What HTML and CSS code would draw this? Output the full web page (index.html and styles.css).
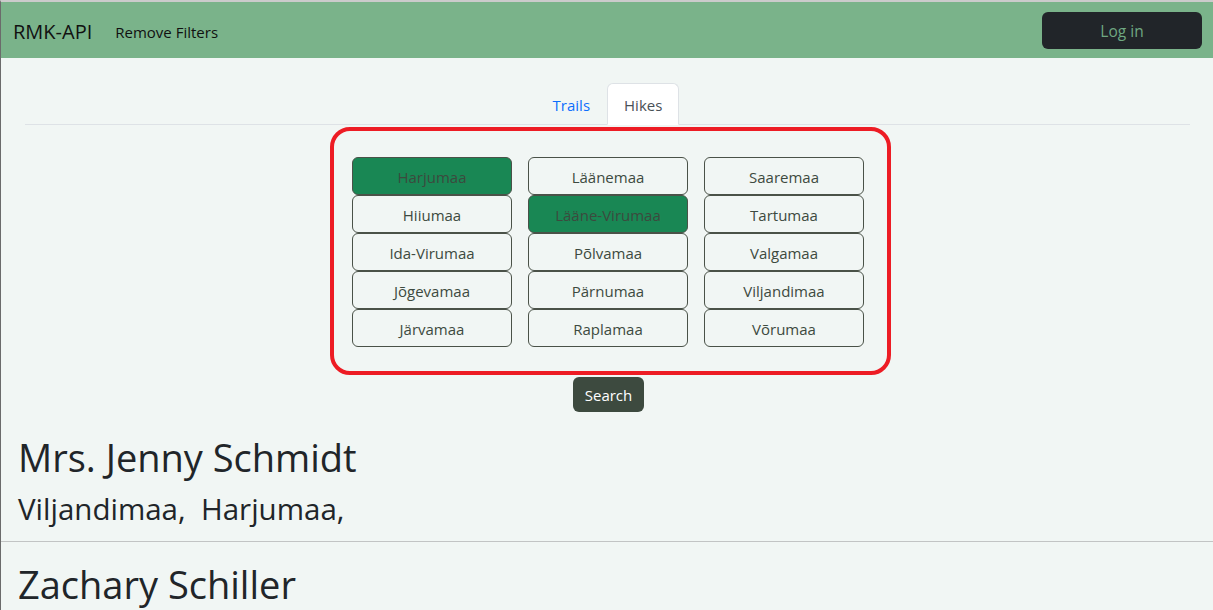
FILE: index.html
```html
<!DOCTYPE html>
<html lang="en">
<head>
<meta charset="utf-8">
<title>RMK-API</title>
<link rel="stylesheet" href="styles.css">
</head>
<body>
<nav class="navbar">
  <a class="brand" href="#">RMK-API</a>
  <a class="nav-link" href="#">Remove Filters</a>
  <button class="btn-login">Log in</button>
</nav>
<main class="content">
  <ul class="tabs">
    <li><a class="tab" href="#">Trails</a></li>
    <li><a class="tab active" href="#">Hikes</a></li>
  </ul>
  <div class="filter-wrap">
    <div class="filter-box">
      <div class="county-grid">
        <button class="county selected">Harjumaa</button>
        <button class="county">Läänemaa</button>
        <button class="county">Saaremaa</button>
        <button class="county">Hiiumaa</button>
        <button class="county selected">Lääne-Virumaa</button>
        <button class="county">Tartumaa</button>
        <button class="county">Ida-Virumaa</button>
        <button class="county">Põlvamaa</button>
        <button class="county">Valgamaa</button>
        <button class="county">Jõgevamaa</button>
        <button class="county">Pärnumaa</button>
        <button class="county">Viljandimaa</button>
        <button class="county">Järvamaa</button>
        <button class="county">Raplamaa</button>
        <button class="county">Võrumaa</button>
      </div>
    </div>
    <button class="btn-search">Search</button>
  </div>
</main>
<section class="hike">
  <h1 class="hike-name">Mrs. Jenny Schmidt</h1>
  <h3 class="hike-counties">Viljandimaa,&nbsp; Harjumaa,</h3>
</section>
<hr class="divider">
<section class="hike">
  <h1 class="hike-name next">Zachary Schiller</h1>
</section>
</body>
</html>
```

FILE: styles.css
```css
* { box-sizing: border-box; }
html, body { margin: 0; padding: 0; }
body {
  font-family: "Open Sans", "Noto Sans", sans-serif;
  background: #f1f6f4;
  color: #212529;
  border-top: 2px solid #cbcbcb;
  border-left: 1px solid #6b6b6b;
  height: 610px;
  overflow: hidden;
}
.navbar {
  display: flex;
  align-items: center;
  height: 56px;
  padding: 0 11px 0 12px;
  background: #7ab38a;
}
.brand {
  font-size: 20px;
  color: #111;
  text-decoration: none;
  margin-right: 23px;
  padding-top: 3px;
}
.nav-link {
  font-size: 15px;
  color: #111;
  text-decoration: none;
  padding-top: 3px;
}
.btn-login {
  margin-left: auto;
  width: 160px;
  height: 37px;
  padding-top: 3px;
  background: #212529;
  color: #6fa882;
  border: none;
  border-radius: 6px;
  font-family: inherit;
  font-size: 15.5px;
}
.content {
  padding: 25px 23px 0 24px;
}
.tabs {
  list-style: none;
  margin: 0;
  padding: 0;
  display: flex;
  justify-content: center;
  border-bottom: 1px solid #dee2e6;
}
.tabs li { margin-bottom: -1px; }
.tab {
  display: block;
  padding: 9px 16px 7px;
  line-height: 24px;
  font-size: 15px;
  color: #0d6efd;
  text-decoration: none;
  border: 1px solid transparent;
  border-radius: 6px 6px 0 0;
}
.tab.active {
  color: #495057;
  background: #fff;
  border-color: #dee2e6 #dee2e6 #fff;
}
.filter-wrap {
  display: flex;
  flex-direction: column;
  align-items: center;
}
.filter-box {
  margin-top: 2px;
  margin-left: 6px;
  width: 561px;
  height: 248px;
  border: 4px solid #ed1c24;
  border-radius: 20px;
  padding: 26px 23px 0 18px;
}
.county-grid {
  display: grid;
  grid-template-columns: repeat(3, 160px);
  grid-auto-rows: 38px;
  column-gap: 16px;
}
.county {
  font-family: inherit;
  font-size: 15px;
  padding-top: 3px;
  color: #3d4a40;
  background: transparent;
  border: 1px solid #4a5248;
  border-radius: 6px;
}
.county.selected {
  background: #198754;
  color: #3c4a3e;
}
.btn-search {
  margin-top: 2px;
  margin-left: 2px;
  width: 71px;
  height: 35px;
  background: #3d4a3f;
  color: #fff;
  border: none;
  border-radius: 6px;
  font-family: inherit;
  font-size: 15px;
}
.hike {
  padding: 0 17px;
}
.hike-name {
  margin: 21px 0 0;
  font-size: 38px;
  font-weight: 400;
  line-height: 48px;
}
.hike-name.next {
  margin-top: 18px;
}
.hike-counties {
  margin: 10px 0 0;
  font-size: 29.5px;
  font-weight: 400;
  line-height: 36px;
}
.divider {
  margin: 14px 0 0;
  border: none;
  border-top: 1px solid #c2c4c4;
}
```
